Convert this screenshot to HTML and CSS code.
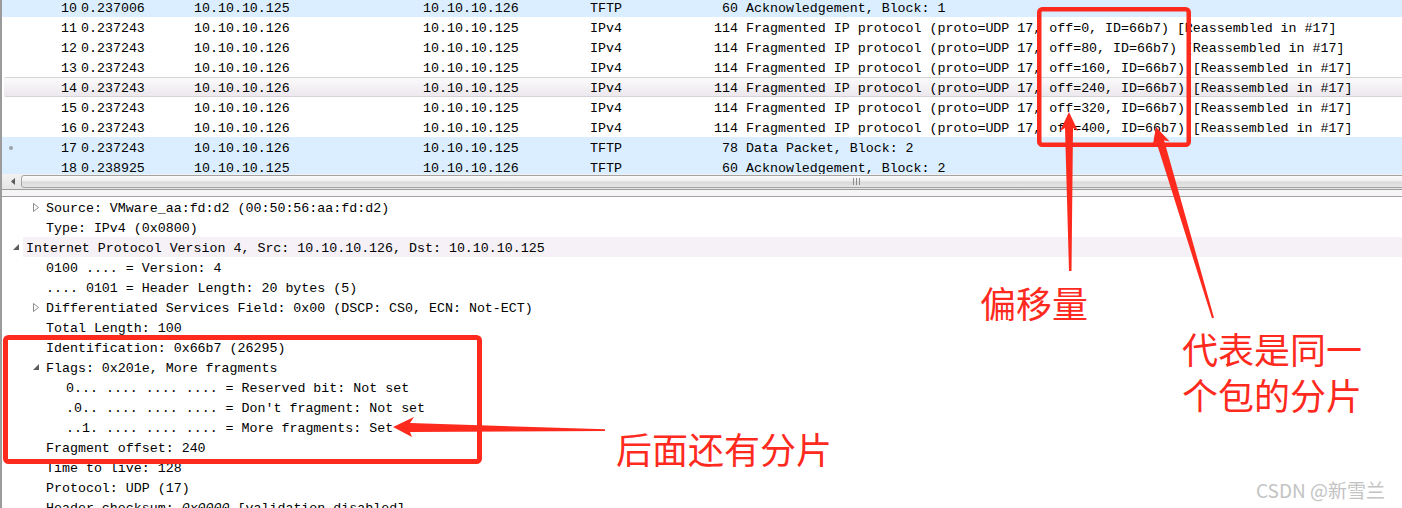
FILE: index.html
```html
<!DOCTYPE html>
<html lang="zh">
<head>
    <meta charset="UTF-8">
    <title>IP fragments</title>
    <link rel="stylesheet" href="styles.css">
</head>
<body>
    <div class="capture">
        <div class="packets">
            <div class="pkt udp"><span class="mark"></span><span class="no">10</span><span class="time">0.237006</span><span class="src">10.10.10.125</span><span class="dst">10.10.10.126</span><span class="proto">TFTP</span><span class="len">60</span><span class="info">Acknowledgement, Block: 1</span></div>
            <div class="pkt"><span class="mark"></span><span class="no">11</span><span class="time">0.237243</span><span class="src">10.10.10.126</span><span class="dst">10.10.10.125</span><span class="proto">IPv4</span><span class="len">114</span><span class="info">Fragmented IP protocol (proto=UDP 17, off=0, ID=66b7) [Reassembled in #17]</span></div>
            <div class="pkt"><span class="mark"></span><span class="no">12</span><span class="time">0.237243</span><span class="src">10.10.10.126</span><span class="dst">10.10.10.125</span><span class="proto">IPv4</span><span class="len">114</span><span class="info">Fragmented IP protocol (proto=UDP 17, off=80, ID=66b7) [Reassembled in #17]</span></div>
            <div class="pkt"><span class="mark"></span><span class="no">13</span><span class="time">0.237243</span><span class="src">10.10.10.126</span><span class="dst">10.10.10.125</span><span class="proto">IPv4</span><span class="len">114</span><span class="info">Fragmented IP protocol (proto=UDP 17, off=160, ID=66b7) [Reassembled in #17]</span></div>
            <div class="pkt selected"><span class="mark"></span><span class="no">14</span><span class="time">0.237243</span><span class="src">10.10.10.126</span><span class="dst">10.10.10.125</span><span class="proto">IPv4</span><span class="len">114</span><span class="info">Fragmented IP protocol (proto=UDP 17, off=240, ID=66b7) [Reassembled in #17]</span></div>
            <div class="pkt"><span class="mark"></span><span class="no">15</span><span class="time">0.237243</span><span class="src">10.10.10.126</span><span class="dst">10.10.10.125</span><span class="proto">IPv4</span><span class="len">114</span><span class="info">Fragmented IP protocol (proto=UDP 17, off=320, ID=66b7) [Reassembled in #17]</span></div>
            <div class="pkt"><span class="mark"></span><span class="no">16</span><span class="time">0.237243</span><span class="src">10.10.10.126</span><span class="dst">10.10.10.125</span><span class="proto">IPv4</span><span class="len">114</span><span class="info">Fragmented IP protocol (proto=UDP 17, off=400, ID=66b7) [Reassembled in #17]</span></div>
            <div class="pkt udp"><span class="mark"><i class="dot"></i></span><span class="no">17</span><span class="time">0.237243</span><span class="src">10.10.10.126</span><span class="dst">10.10.10.125</span><span class="proto">TFTP</span><span class="len">78</span><span class="info">Data Packet, Block: 2</span></div>
            <div class="pkt udp"><span class="mark"></span><span class="no">18</span><span class="time">0.238925</span><span class="src">10.10.10.125</span><span class="dst">10.10.10.126</span><span class="proto">TFTP</span><span class="len">60</span><span class="info">Acknowledgement, Block: 2</span></div>
        </div>

        <div class="hscroll">
            <span class="step">
                <svg width="4" height="7" viewBox="0 0 4 7"><polygon points="4,0 4,7 0,3.5" fill="#5a5a5a"/></svg>
            </span>
            <div class="thumb">
                <svg class="grip" width="7" height="7" viewBox="0 0 7 7">
                    <path d="M0.5 0v7M3.5 0v7M6.5 0v7" stroke="#8a8a8a" stroke-width="1"/>
                </svg>
            </div>
        </div>
        <div class="splitter"></div>

        <div class="details">
            <div class="node l1"><span class="tog"><svg width="6" height="9" viewBox="0 0 6 9"><polygon points="0.5,0.5 5.5,4.5 0.5,8.5" fill="#fff" stroke="#8c8c8c"/></svg></span><span class="label">Source: VMware_aa:fd:d2 (00:50:56:aa:fd:d2)</span></div>
            <div class="node l1"><span class="tog"></span><span class="label">Type: IPv4 (0x0800)</span></div>
            <div class="node l0 hilite"><span class="tog"><svg width="6" height="6" viewBox="0 0 6 6"><polygon points="6,0 6,6 0,6" fill="#5c5c5c"/></svg></span><span class="label">Internet Protocol Version 4, Src: 10.10.10.126, Dst: 10.10.10.125</span></div>
            <div class="node l1"><span class="tog"></span><span class="label">0100 .... = Version: 4</span></div>
            <div class="node l1"><span class="tog"></span><span class="label">.... 0101 = Header Length: 20 bytes (5)</span></div>
            <div class="node l1"><span class="tog"><svg width="6" height="9" viewBox="0 0 6 9"><polygon points="0.5,0.5 5.5,4.5 0.5,8.5" fill="#fff" stroke="#8c8c8c"/></svg></span><span class="label">Differentiated Services Field: 0x00 (DSCP: CS0, ECN: Not-ECT)</span></div>
            <div class="node l1"><span class="tog"></span><span class="label">Total Length: 100</span></div>
            <div class="node l1"><span class="tog"></span><span class="label">Identification: 0x66b7 (26295)</span></div>
            <div class="node l1"><span class="tog"><svg width="6" height="6" viewBox="0 0 6 6"><polygon points="6,0 6,6 0,6" fill="#5c5c5c"/></svg></span><span class="label">Flags: 0x201e, More fragments</span></div>
            <div class="node l2"><span class="tog"></span><span class="label">0... .... .... .... = Reserved bit: Not set</span></div>
            <div class="node l2"><span class="tog"></span><span class="label">.0.. .... .... .... = Don't fragment: Not set</span></div>
            <div class="node l2"><span class="tog"></span><span class="label">..1. .... .... .... = More fragments: Set</span></div>
            <div class="node l1"><span class="tog"></span><span class="label">Fragment offset: 240</span></div>
            <div class="node l1"><span class="tog"></span><span class="label">Time to live: 128</span></div>
            <div class="node l1"><span class="tog"></span><span class="label">Protocol: UDP (17)</span></div>
            <div class="node l1"><span class="tog"></span><span class="label">Header checksum: <i>0x0000</i> [validation disabled]</span></div>
        </div>
    </div>

    <!-- red annotations drawn over the capture -->
    <svg class="marks" width="1402" height="508" viewBox="0 0 1402 508">
        <g fill="none" stroke="#fe2a1e">
            <rect x="1039.25" y="9.25" width="149.5" height="135.5" rx="3" stroke-width="4.5"/>
            <rect x="5.5" y="337.5" width="474" height="124" rx="3" stroke-width="5"/>
        </g>
        <g fill="#fe2a1e">
            <polygon points="1069,112 1078,131 1073,128 1071.5,271 1069,271 1065,128 1060,131"/>
            <polygon points="1156,127 1169.7,141.6 1164.1,140.3 1214,317.7 1212,318.3 1156.5,142.5 1152.5,146.8"/>
            <polygon points="393,427 414,417 410,423 605,429.3 605,431 410,432 412,437"/>
        </g>
    </svg>
    <div class="note note-offset">偏移量</div>
    <div class="note note-same">代表是同一<br>个包的分片</div>
    <div class="note note-more">后面还有分片</div>
    <div class="watermark">CSDN @新雪兰</div>
</body>
</html>
```

FILE: styles.css
```css
body {
    margin: 0;
    width: 1402px;
    height: 508px;
    overflow: hidden;
    background: #fff;
    color: #000;
    font-family: "Liberation Mono", "DejaVu Sans Mono", monospace;
    font-size: 13.3px;
    position: relative;
}
.capture {
    height: 508px;
    border-left: 2px solid #9b9b9b;
    overflow: hidden;
}

/* packet list */
.packets {
    height: 177px;
    margin-top: -3px;
    overflow: hidden;
}
.pkt {
    display: flex;
    height: 18px;
    padding-top: 2px;
    line-height: 20px;
    white-space: nowrap;
}
.pkt.udp {
    background: #daeeff;
}
.pkt.selected {
    margin-left: 2px;
    height: 17px;
    padding-top: 1px;
    border-top: 1px solid #d6d2d8;
    border-bottom: 1px solid #d6d2d8;
    border-radius: 2px 0 0 2px;
    background: linear-gradient(#fbfafb, #ece8ee);
}
.pkt.selected .mark {
    width: 16px;
}
.mark {
    width: 18px;
    flex: none;
    display: flex;
    align-items: center;
    justify-content: center;
}
.dot {
    width: 4px;
    height: 4px;
    border-radius: 50%;
    background: #9aa3ac;
}
.no {
    width: 57px;
    flex: none;
    text-align: right;
}
.time {
    width: 113px;
    padding-left: 4px;
    flex: none;
}
.src {
    width: 229px;
    flex: none;
}
.dst {
    width: 167px;
    flex: none;
}
.proto {
    width: 100px;
    flex: none;
}
.len {
    width: 48px;
    flex: none;
    text-align: right;
}
.info {
    padding-left: 8px;
}

/* horizontal scrollbar + pane splitter */
.hscroll {
    display: flex;
    align-items: center;
    height: 15px;
    border-bottom: 1px solid #9c9c9c;
    background: linear-gradient(#f2f2f2, #e4e4e4);
}
.step {
    width: 19px;
    flex: none;
    display: flex;
    justify-content: center;
    padding-left: 2px;
    box-sizing: border-box;
}
.thumb {
    flex: 1;
    height: 11px;
    margin-right: -400px;
    border: 1px solid #a3a3a3;
    border-radius: 3px;
    background: linear-gradient(#fcfcfc 0%, #eeeeee 45%, #dadada 55%, #e6e6e6 100%);
    display: flex;
    align-items: center;
    padding-left: 831px;
}
.splitter {
    height: 6px;
    border-bottom: 1px solid #a2a2a2;
    background: #f6f4f6;
}

/* packet details tree */
.node {
    display: flex;
    height: 20px;
    line-height: 24px;
    white-space: nowrap;
}
.node.l0 { padding-left: 9px; }
.node.l1 { padding-left: 29px; }
.node.l2 { padding-left: 49px; }
.tog {
    width: 15px;
    flex: none;
    padding-left: 2px;
    box-sizing: border-box;
    display: flex;
    align-items: center;
}
.label {
    flex: 1;
    height: 20px;
}
.hilite .label {
    margin-left: -3px;
    padding-left: 3px;
    background: #f5f1f6;
}

/* annotations */
.marks {
    position: absolute;
    left: 0;
    top: 0;
    pointer-events: none;
}
.note {
    position: absolute;
    color: #fe2a1e;
    font-family: "Noto Sans CJK SC", sans-serif;
    font-size: 36px;
    line-height: 46px;
    white-space: nowrap;
}
.note-offset {
    left: 980px;
    top: 279px;
}
.note-same {
    left: 1182px;
    top: 325px;
}
.note-more {
    left: 616px;
    top: 425px;
}
.watermark {
    position: absolute;
    left: 1256px;
    top: 477px;
    color: #c3c3c3;
    font-family: "Noto Sans CJK SC", sans-serif;
    font-size: 19px;
    line-height: 26px;
    white-space: nowrap;
}
```
